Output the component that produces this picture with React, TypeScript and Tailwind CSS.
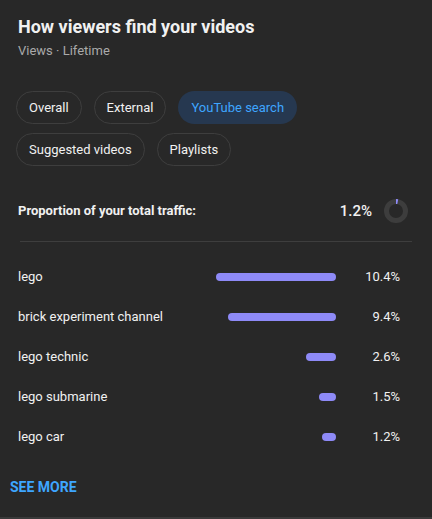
import React from "react";

const chips = [
  { label: "Overall" },
  { label: "External" },
  { label: "YouTube search", active: true },
  { label: "Suggested videos" },
  { label: "Playlists" },
];

const rows = [
  { term: "lego", width: 120, pct: "10.4%" },
  { term: "brick experiment channel", width: 108, pct: "9.4%" },
  { term: "lego technic", width: 30, pct: "2.6%" },
  { term: "lego submarine", width: 17, pct: "1.5%" },
  { term: "lego car", width: 14, pct: "1.2%" },
];

function Donut() {
  // ring with a small 1.2% slice at the top
  const r = 9.5;
  const c = 2 * Math.PI * r;
  return (
    <svg width="24" height="24" viewBox="0 0 24 24">
      <circle cx="12" cy="12" r={r} fill="none" stroke="#3d3d3d" strokeWidth="5" />
      <circle
        cx="12"
        cy="12"
        r={r}
        fill="none"
        stroke="#8e8af7"
        strokeWidth="5"
        strokeDasharray={`${c * 0.03} ${c}`}
        transform="rotate(-90 12 12)"
      />
    </svg>
  );
}

export default function App() {
  return (
    <div className="h-[519px] w-[432px] bg-[#282828] font-['Roboto',sans-serif] text-white">
      <div className="flex h-[517px] flex-col">
        <div className="px-[18px] pt-[15px]">
          <h2 className="text-[18px] font-bold leading-[24px] text-[#f1f1f1]">How viewers find your videos</h2>
          <p className="mt-[3px] text-[13px] leading-[18px] text-[#aaaaaa]">Views · Lifetime</p>
        </div>

        <div className="mt-[31px] flex flex-wrap gap-x-3 gap-y-[9px] px-4">
          {chips.map((c) =>
            c.active ? (
              <span
                key={c.label}
                className="flex h-[33px] items-center rounded-full bg-[#263850] px-[13px] text-[13px] text-[#3ea6ff]"
              >
                {c.label}
              </span>
            ) : (
              <span
                key={c.label}
                className="flex h-[33px] items-center rounded-full border border-[#3e3e3e] px-3 text-[13px] text-[#f1f1f1]"
              >
                {c.label}
              </span>
            )
          )}
        </div>

        <div className="mt-[33px] flex items-center px-[18px]">
          <span className="flex-1 text-[13px] font-bold text-[#f1f1f1]">Proportion of your total traffic:</span>
          <span className="text-[15px] font-medium text-[#f1f1f1]">1.2%</span>
          <span className="ml-3 mr-[6px]">
            <Donut />
          </span>
        </div>

        <div className="mx-5 mt-[18px] h-px bg-[#3e3e3e]" />

        <div className="mt-[15px] flex flex-col">
          {rows.map((r) => (
            <div key={r.term} className="flex h-10 items-center pl-[18px] pr-8">
              <span className="flex-1 text-[13px] text-[#f1f1f1]">{r.term}</span>
              <div className="flex w-[130px] justify-end">
                <div className="h-2 rounded-full bg-[#8e8af7]" style={{ width: r.width }} />
              </div>
              <span className="w-16 text-right text-[13px] text-[#f1f1f1]">{r.pct}</span>
            </div>
          ))}
        </div>

        <div className="mt-[18px] px-[10px]">
          <span className="text-[14px] font-bold text-[#3ea6ff]">SEE MORE</span>
        </div>
      </div>
      <div className="h-[2px] bg-[#3a3a3a]" />
    </div>
  );
}
